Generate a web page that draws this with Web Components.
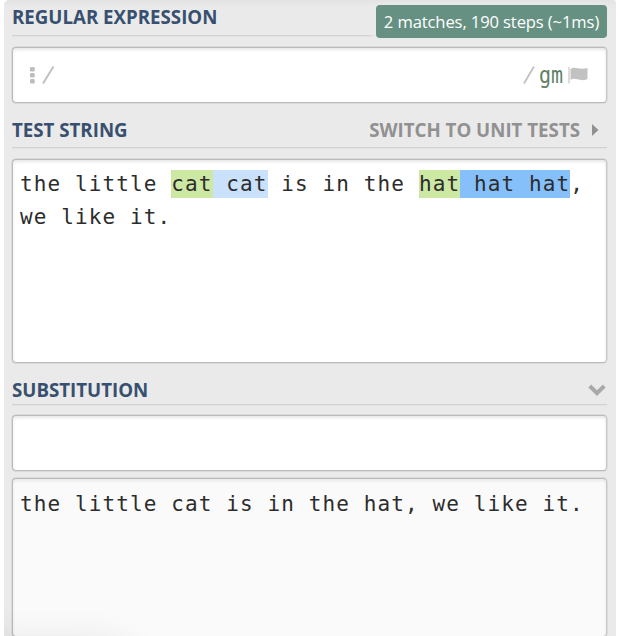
<!DOCTYPE html>
<html lang="en">
<head>
<meta charset="utf-8">
<title>Regex tester</title>
<style>
html, body { margin: 0; height: 100%; overflow: hidden; background: #fff; }
</style>
</head>
<body>
<regex-app></regex-app>
<script>
function define(name, html) {
  const t = document.createElement('template');
  t.innerHTML = html.trim();
  customElements.define(name, class extends HTMLElement {
    constructor() {
      super();
      this.attachShadow({ mode: 'open' }).append(t.content.cloneNode(true));
    }
  });
}

define('section-head', `
<style>
:host { display: flex; justify-content: space-between; box-sizing: border-box; margin: 0 9px 0 8px; border-bottom: 1px solid #d2d2d2; box-shadow: 0 1px #e3e3e3; font: 700 18.7px/26px "Open Sans", sans-serif; color: #38506f; white-space: nowrap; }
span { display: block; }
</style><span><slot></slot></span><slot name="end"></slot>`);

define('match-badge', `
<style>
:host { display: block; box-sizing: border-box; width: 231px; height: 33px; border-radius: 4px; background: #669182; color: #fff; font: 400 16.6px/33px "Open Sans", sans-serif; text-align: center; letter-spacing: -.12px; box-shadow: -5px 0 4px #eaeaea; }
</style><slot></slot>`);

define('mode-link', `
<style>
:host { display: flex; align-items: center; height: 26px; color: #919191; font: 700 18.7px/26px "Open Sans", sans-serif; }
svg { margin: 0 8px 0 12px; }
</style><slot></slot><svg width="7" height="12"><path d="M0 0L6.5 6L0 12Z" fill="#919191"/></svg>`);

define('fold-icon', `
<style>:host { display: flex; align-items: center; margin: -2px 1px 0 0; }</style>
<svg width="18" height="12"><path d="M1.8 2L9 9.2L16.2 2" fill="none" stroke="#a9a9a9" stroke-width="4"/></svg>`);

define('text-panel', `
<style>
:host { display: block; box-sizing: border-box; margin: 0 9px 0 8px; border: 1px solid #bbb; border-right-color: #c8c8c8; border-radius: 4px; background: #fff; box-shadow: inset 0 2px 3px #e8e8e8, 0 0 0 .5px #ccc; padding: 8px 7px; color: #2c2c2c; font: 400 21px/33px "DejaVu Sans Mono", monospace; letter-spacing: 1.11px; white-space: pre; }
</style><slot></slot>`);

define('text-line', `
<style>:host { display: block; height: 33px; }</style><slot></slot>`);

define('regex-mark', `
<style>
:host { display: inline; padding: 2px 0; background: var(--mark); }
</style><slot></slot>`);

define('pattern-bar', `
<style>
:host { display: flex; align-items: center; height: 54px; letter-spacing: 0; color: #c1c1c1; }
.slash { display: block; }
.grow { flex: 1; }
.flags { color: #5f8167; font: 400 20px/30px "DejaVu Sans Mono", monospace; letter-spacing: 0; margin: 0 5px 0 4px; transform: scaleY(1.15); }
</style>
<svg width="5" height="17"><g fill="#bdbdbd"><rect y="0" width="4.7" height="4.5" rx="1.3"/><rect y="6" width="4.7" height="4.5" rx="1.3"/><rect y="12" width="4.7" height="4.5" rx="1.3"/></g></svg>
<svg class="slash" width="14" height="18" style="margin-left:7px"><path d="M1 17.5L11.5 .5" stroke="#c1c1c1" stroke-width="2"/></svg>
<span class="grow"></span>
<svg class="slash" width="12" height="18"><path d="M1 17.5L11 .5" stroke="#c1c1c1" stroke-width="1.8"/></svg>
<span class="flags">gm</span>
<svg width="20" height="18" style="margin-right:1px"><path d="M1 1V17.5" stroke="#c6c6c6" stroke-width="1.2"/><path d="M2.500 3C7-.5 10 4.500 19.500 2V13C12 16.500 8 10.500 2.500 14Z" fill="#c2c2c2"/></svg>`);

define('regex-app', `
<style>
:host { display: flex; flex-direction: column; box-sizing: border-box; margin: 0 0 0 4px; width: 612px; height: 636px; overflow: hidden; background: linear-gradient(#e3e3e3, #eaeaea 8px); border-radius: 5px 3px 0 0; position: relative; }
section-head { flex: none; }
.a { height: 36px; padding-top: 4px; }
match-badge { position: absolute; right: 9px; top: 5px; }
text-panel { flex: none; }
.re { height: 56px; margin-top: 11px; padding: 0 17px; }
.s { height: 32px; }
.shade { position: absolute; left: -40px; bottom: -60px; width: 165px; height: 50px; border-radius: 20px; box-shadow: 0 0 38px rgba(0,0,0,.12); }
</style>
<section-head class="a">REGULAR EXPRESSION</section-head>
<match-badge>2 matches, 190 steps (~1ms)</match-badge>
<text-panel class="re"><pattern-bar></pattern-bar></text-panel>
<section-head class="s" style="margin-top:13px;padding-top:1px">TEST STRING<mode-link slot="end">SWITCH TO UNIT TESTS</mode-link></section-head>
<text-panel style="height:204px;margin-top:11px"><text-line>the little <regex-mark style="--mark:#cde8a2">cat</regex-mark><regex-mark style="--mark:#cae1fb"> cat</regex-mark> is in the <regex-mark style="--mark:#cde8a2">hat</regex-mark><regex-mark style="--mark:#85c0fa"> hat hat</regex-mark>,</text-line><text-line>we like it.</text-line></text-panel>
<section-head class="s" style="margin-top:10px;padding-top:4px">SUBSTITUTION<fold-icon slot="end"></fold-icon></section-head>
<text-panel style="height:56px;margin-top:10px"></text-panel>
<text-panel style="height:159px;margin-top:7px;padding-top:9px;background:#fafafa"><text-line>the little cat is in the hat, we like it.</text-line></text-panel>
<div class="shade"></div>`);
</script>
</body>
</html>
